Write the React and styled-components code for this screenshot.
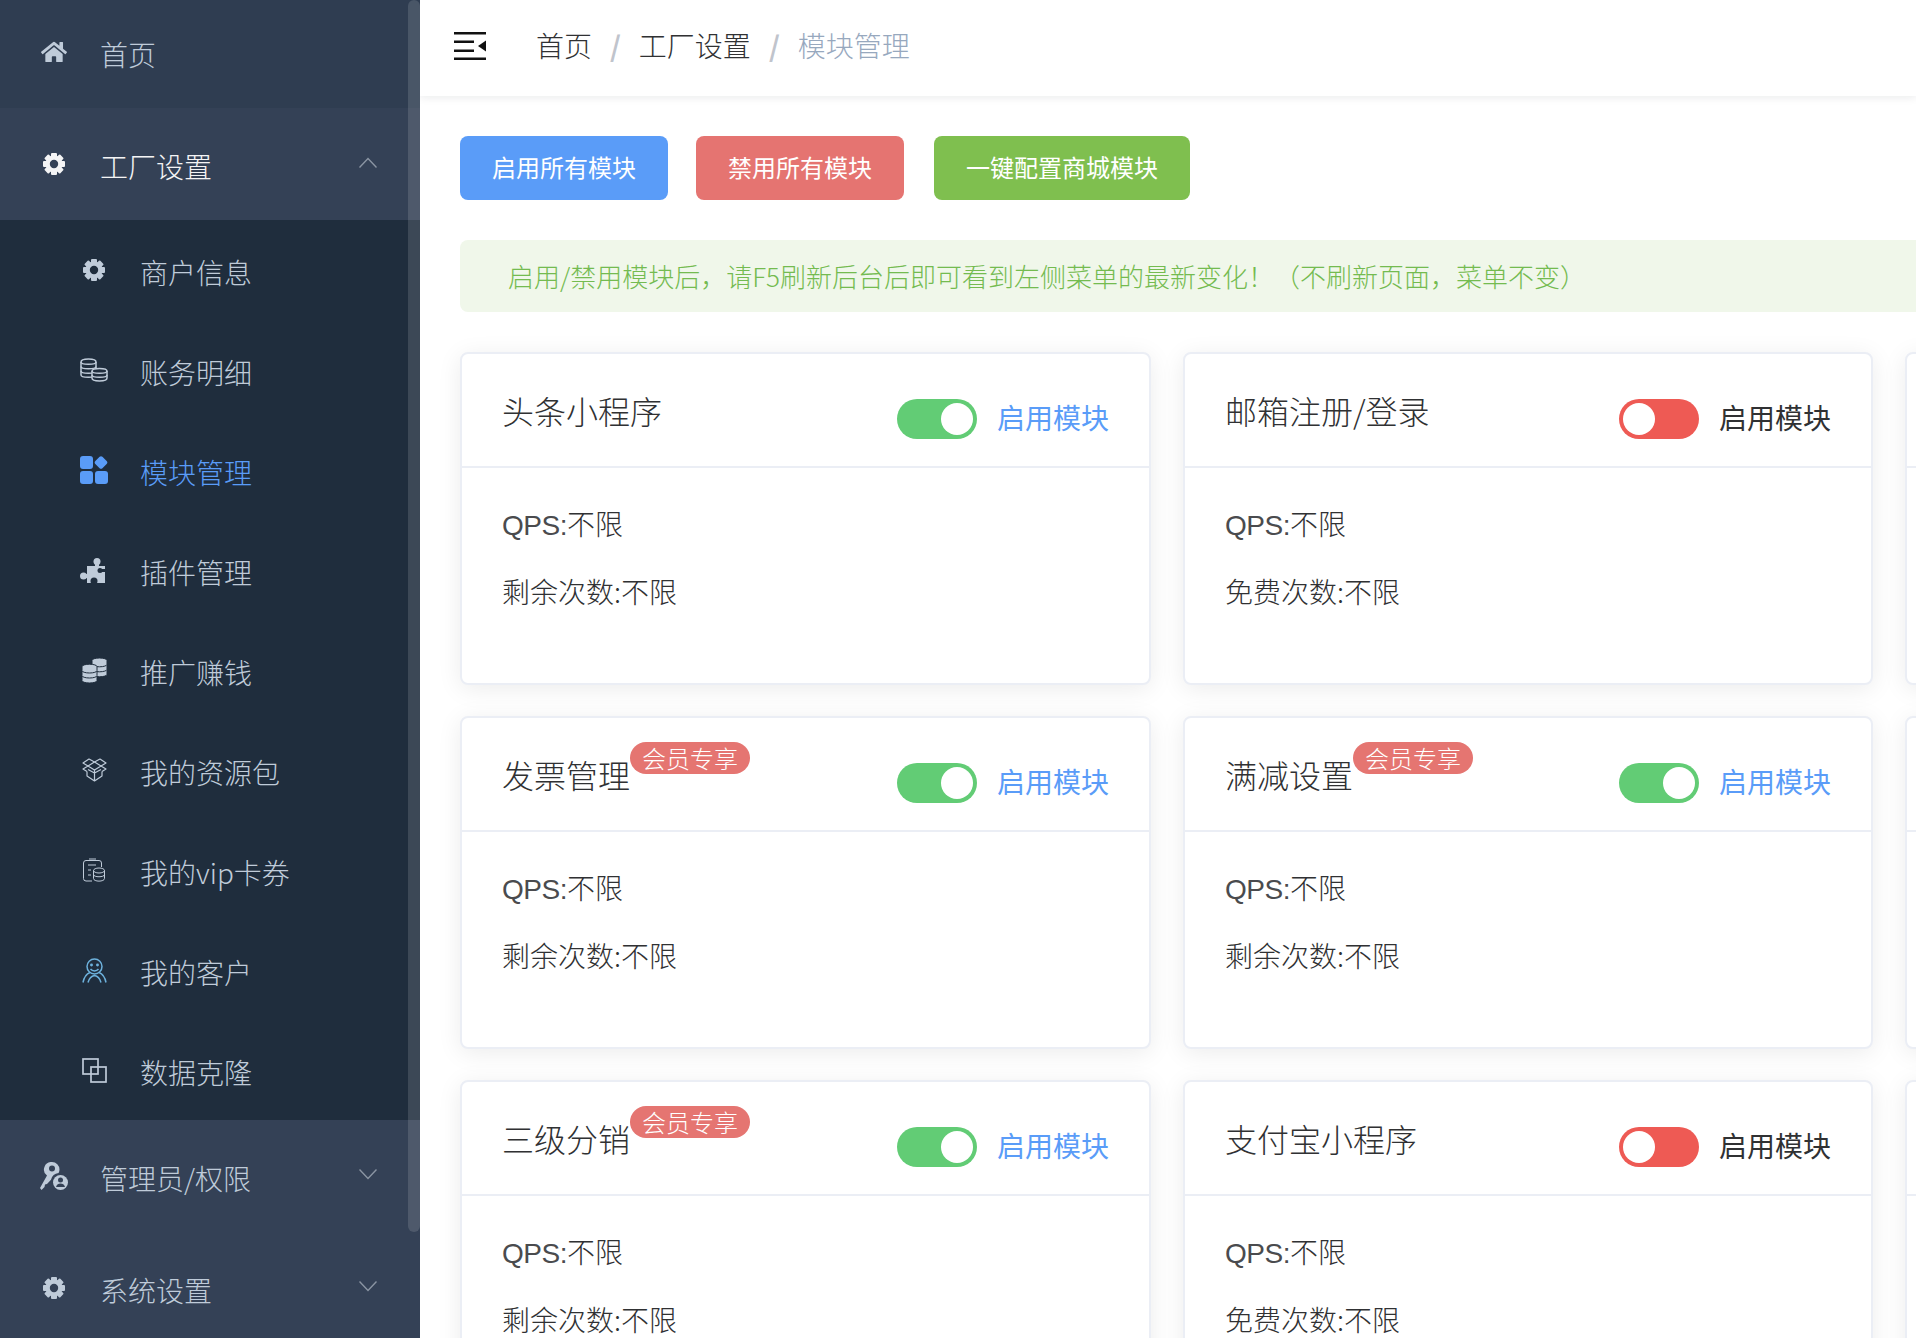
import React from "react";
import styled, { createGlobalStyle } from "styled-components";
import { FaHome } from "react-icons/fa";

const Global = createGlobalStyle`
  html, body { margin: 0; padding: 0; background: #fff; }
  body {
    font-family: "Noto Sans CJK SC", "Liberation Sans", sans-serif;
    font-weight: 300;
    color: #303133;
  }
  * { box-sizing: border-box; }
`;

const Page = styled.div`
  display: flex;
  width: 1916px;
  height: 1338px;
  overflow: hidden;
`;

/* ---------- sidebar ---------- */

const Side = styled.aside`
  position: relative;
  flex: 0 0 420px;
  height: 100%;
  overflow: hidden;
  background: #344156;
`;

const Menu = styled.nav`
  margin-top: -4px;
`;

const Row = styled.div`
  display: flex;
  align-items: center;
  height: ${(p) => (p.$sub ? 100 : 112)}px;
  padding-left: ${(p) => (p.$sub ? 80 : 40)}px;
  padding-right: 43px;
  background: ${(p) => (p.$sub ? "#1f2d3d" : p.$first ? "#2f3d51" : "#344156")};
  color: ${(p) => (p.$active ? "#5a9cf8" : p.$open ? "#f4f4f5" : "#bfcbd9")};
`;

const IconBox = styled.span`
  display: flex;
  align-items: center;
  justify-content: center;
  flex: 0 0 28px;
  height: 28px;
  margin-right: 32px;
`;

const Label = styled.span`
  flex: 1;
  padding-top: 4px;
  font-size: 28px;
  line-height: 40px;
`;

const Scroll = styled.div`
  position: absolute;
  top: 0;
  right: 0;
  width: 12px;
  height: 1232px;
  border-radius: 6px;
  background: rgba(255, 255, 255, 0.13);
`;

/* ---------- icons ---------- */

const Gear = ({ size = 22 }) => (
  <svg width={size} height={size} viewBox="0 0 22 22" fill="currentColor">
    {[0, 45, 90, 135, 180, 225, 270, 315].map((a) => (
      <rect key={a} x="8" y="0" width="6" height="5" rx="1" transform={`rotate(${a} 11 11)`} />
    ))}
    <circle cx="11" cy="11" r="6.3" fill="none" stroke="currentColor" strokeWidth="4.2" />
  </svg>
);

const ChevronSvg = styled.svg`
  margin-bottom: 4px;
`;

const Chevron = ({ up }) => (
  <ChevronSvg width="18" height="11" viewBox="0 0 18 11" fill="none" stroke="#8b95a3" strokeWidth="1.4">
    <polyline points={up ? "0.5,10.5 9,1.5 17.5,10.5" : "0.5,0.5 9,9.5 17.5,0.5"} />
  </ChevronSvg>
);

const Ledger = () => (
  <svg width="28" height="24" viewBox="0 0 28 24" fill="#1f2d3d" stroke="currentColor" strokeWidth="1.5">
    <path d="M1 4c0-4 15-4 15 0v13c0 3-15 3-15 0z" />
    <path d="M1 4c0 3 15 3 15 0M1 8.500c0 3 15 3 15 0M1 13c0 3 15 3 15 0" fill="none" />
    <path d="M12 13c0-3.500 15-3.500 15 0v7c0 4-15 4-15 0z" />
    <path d="M12 13c0 3 15 3 15 0M12 17c0 3 15 3 15 0" fill="none" />
  </svg>
);

const Apps = () => (
  <svg width="28" height="28" viewBox="0 0 28 28" fill="currentColor">
    <rect x="0" y="0" width="13" height="13" rx="3" />
    <rect x="16" y="1.500" width="10" height="10" rx="2" transform="rotate(45 21 6.500)" />
    <rect x="0" y="15" width="13" height="13" rx="3" />
    <rect x="15" y="15" width="13" height="13" rx="3" />
  </svg>
);

const Puzzle = () => (
  <svg width="28" height="25" viewBox="0 0 28 25" fill="currentColor">
    <rect x="7" y="8" width="18" height="17" />
    <rect x="15" y="4" width="4" height="5" />
    <circle cx="17" cy="3.500" r="3.500" />
    <rect x="3" y="16" width="5" height="4" />
    <circle cx="3.500" cy="18" r="3.500" />
    <circle cx="14" cy="23" r="3.500" fill="#1f2d3d" />
    <rect x="20" y="11" width="6" height="3" fill="#1f2d3d" />
    <circle cx="20" cy="12.500" r="2.500" fill="#1f2d3d" />
  </svg>
);

const coin = (x, y) => `M${x} ${y}a7.500 2.400 0 0 1 15 0v4a7.500 2.400 0 0 1 -15 0z`;

const Coins = () => (
  <svg width="25" height="25" viewBox="0 0 25 25" fill="currentColor" stroke="#1f2d3d" strokeWidth="1">
    {[12.4, 7.4, 2.4].map((y) => <path key={y} d={coin(10, y)} />)}
    {[18.6, 13.6, 8.6].map((y) => <path key={y} d={coin(0, y)} />)}
  </svg>
);

const Box = () => (
  <svg width="25" height="24" viewBox="0 0 25 24" fill="none" stroke="currentColor" strokeWidth="1.200" strokeLinejoin="round">
    <path d="M12.500 4L7 1 1 5l5 3-5 3 4 2.500" />
    <path d="M12.500 4l5.500-3 6 4-5 3 5 3-4 2.500" />
    <path d="M6 8l6.500-4 6.500 4-6.500 4zM6 8l6.500 4 6.500-4" />
    <path d="M12.500 12v11M5 13.500V18l7.500 5 7.500-5v-4.500M6 11.500l6.500 3.500 6.500-3.500" />
  </svg>
);

const VipCard = () => (
  <svg width="22" height="24" viewBox="0 0 22 24" fill="none" stroke="currentColor" strokeWidth="1">
    <path d="M9 23H3a2.500 2.500 0 0 1-2.500-2.500V5A2.500 2.500 0 0 1 3 2.500h13A2.500 2.500 0 0 1 18.500 5v4" />
    <path d="M6 1h7M5 7h8M5 12h3M5 17h3" />
    <ellipse cx="16" cy="12.500" rx="5.500" ry="2.500" />
    <path d="M10.500 12.500v8c0 3.500 11 3.500 11 0v-8M10.500 16.500c0 3 11 3 11 0" />
  </svg>
);

const Customer = () => (
  <svg width="25" height="25" viewBox="0 0 25 25" fill="none" stroke="#6db1dc" strokeWidth="1.500">
    <circle cx="12.500" cy="8.500" r="7.500" />
    <path d="M8.500 11c2 2.500 6 2.500 8 0" />
    <circle cx="9.500" cy="7" r="0.700" />
    <circle cx="15.500" cy="7" r="0.700" />
    <path d="M1 24.500C2 19.500 4 16 8 14.500M24 24.500c-1-5-3-8.500-7-10M6 24.500c1-3.500 3-6.500 6.500-7 3.500.5 5.500 3.500 6.500 7" />
  </svg>
);

const Clone = () => (
  <svg width="25" height="25" viewBox="0 0 25 25" fill="none" stroke="currentColor" strokeWidth="1.700">
    <rect x="1" y="1" width="15" height="15" />
    <rect x="9" y="9" width="15" height="15" />
  </svg>
);

const KeyUser = () => (
  <svg width="28" height="28" viewBox="0 0 28 28" fill="currentColor">
    <path d="M12 0a7.500 7.500 0 0 1 7.500 7.500c0 1.300-.3 2.400-.9 3.500a9 9 0 0 0-7.600 6.700L7 22l-2 .5-.5 2.500L1.500 28 0 26l7-12.500A7.500 7.500 0 0 1 12 0zm0 3.500a3 3 0 1 0 0 6 3 3 0 0 0 0-6z" fillRule="evenodd" />
    <circle cx="20.500" cy="20.500" r="7.500" />
    <circle cx="20.500" cy="18" r="2.500" fill="#344156" />
    <path d="M16 25c.5-2.500 2.500-3.500 4.500-3.500s4 1 4.500 3.500z" fill="#344156" />
  </svg>
);

const MenuToggle = () => (
  <svg width="32" height="28" viewBox="0 0 32 28" fill="#111">
    <rect width="32" height="2.500" />
    <rect y="8.500" width="20" height="2.500" />
    <rect y="17.500" width="20" height="2.500" />
    <rect y="25.500" width="32" height="2.500" />
    <path d="M32 8.500v11l-8-5.500z" />
  </svg>
);

/* ---------- header ---------- */

const Main = styled.main`
  flex: 1;
  min-width: 0;
  overflow: hidden;
`;

const Header = styled.header`
  position: relative;
  display: flex;
  align-items: center;
  height: 96px;
  padding: 0 0 4px 34px;
  background: #fff;
  box-shadow: 0 2px 8px rgba(0, 21, 41, 0.08);
`;

const Crumbs = styled.div`
  display: flex;
  align-items: center;
  margin: 0 0 2px 50px;
  font-size: 28px;
  line-height: 40px;
`;

const Crumb = styled.span`
  color: ${(p) => (p.$current ? "#97a8be" : "#303133")};
`;

const Sep = styled.span`
  margin: 0 18px;
  color: #c0c4cc;
  font-weight: 700;
`;

/* ---------- content ---------- */

const Content = styled.div`
  width: 2170px;
  padding: 40px;
`;

const Toolbar = styled.div`
  display: flex;
  gap: 28px;
  margin-bottom: 40px;
`;

const ActionBtn = styled.button`
  height: 64px;
  padding: 0 32px 4px;
  border: 0;
  border-radius: 8px;
  background: ${(p) => p.$bg};
  color: #fff;
  font-family: inherit;
  font-size: 24px;
  font-weight: 400;
  white-space: nowrap;

  &:last-child {
    margin-left: 2px;
  }
`;

const Notice = styled.div`
  display: flex;
  align-items: center;
  height: 72px;
  margin-bottom: 40px;
  padding: 0 0 2px 48px;
  border-radius: 8px;
  background: #f0f7ea;
  color: #74bb50;
  font-size: 26px;
`;

const Cards = styled.div`
  display: grid;
  grid-template-columns: 691px 690px 690px;
  column-gap: 32px;
  row-gap: 31px;
`;

const Card = styled.section`
  height: 333px;
  border: 2px solid #ebeef5;
  border-radius: 8px;
  background: #fff;
  box-shadow: 0 4px 24px rgba(0, 0, 0, 0.08);
`;

const CardHead = styled.div`
  display: flex;
  align-items: center;
  justify-content: space-between;
  height: 114px;
  padding: 0 40px;
  border-bottom: 2px solid #ebeef5;
`;

const Title = styled.h3`
  position: relative;
  margin: 0;
  font-size: 32px;
  font-weight: 300;
  line-height: 44px;
`;

const Badge = styled.span`
  position: absolute;
  left: 100%;
  top: -10px;
  width: 120px;
  height: 32px;
  border-radius: 16px;
  background: #e57571;
  color: #fff;
  font-size: 24px;
  line-height: 32px;
  text-align: center;
`;

const SwitchWrap = styled.div`
  display: flex;
  align-items: center;
  gap: 20px;
  padding-top: 17px;
`;

const Track = styled.span`
  display: flex;
  justify-content: ${(p) => (p.$on ? "flex-end" : "flex-start")};
  width: 80px;
  height: 40px;
  padding: 4px;
  border-radius: 20px;
  background: ${(p) => (p.$on ? "#62cc75" : "#ee5a54")};
`;

const Knob = styled.span`
  width: 32px;
  height: 32px;
  border-radius: 50%;
  background: #fff;
`;

const SwitchText = styled.span`
  margin-bottom: 3px;
  color: ${(p) => (p.$on ? "#5a9cf8" : "#303133")};
  font-size: 28px;
  font-weight: 400;
  line-height: 40px;
`;

const CardBody = styled.div`
  padding: 37px 40px 0;
`;

const Line = styled.p`
  height: 36px;
  margin: 0 0 32px;
  font-size: 28px;
  line-height: 36px;
`;

const Qps = styled.span`
  color: #4a4b4e;
  font-family: "Liberation Sans", sans-serif;
  font-weight: 400;
  letter-spacing: -0.5px;
  line-height: 1;
`;

const subItems = [
  { label: "商户信息", icon: <Gear /> },
  { label: "账务明细", icon: <Ledger /> },
  { label: "模块管理", icon: <Apps />, active: true },
  { label: "插件管理", icon: <Puzzle /> },
  { label: "推广赚钱", icon: <Coins /> },
  { label: "我的资源包", icon: <Box /> },
  { label: "我的vip卡券", icon: <VipCard /> },
  { label: "我的客户", icon: <Customer /> },
  { label: "数据克隆", icon: <Clone /> },
];

const modules = [
  { title: "头条小程序", on: true, extra: "剩余次数:不限" },
  { title: "邮箱注册/登录", on: false, extra: "免费次数:不限" },
  { blank: true },
  { title: "发票管理", vip: true, on: true, extra: "剩余次数:不限" },
  { title: "满减设置", vip: true, on: true, extra: "剩余次数:不限" },
  { blank: true },
  { title: "三级分销", vip: true, on: true, extra: "剩余次数:不限" },
  { title: "支付宝小程序", on: false, extra: "免费次数:不限" },
  { blank: true },
];

export default function App() {
  return (
    <Page>
      <Global />
      <Side>
        <Menu>
          <Row $first>
            <IconBox><FaHome size={26} /></IconBox>
            <Label>首页</Label>
          </Row>
          <Row $open>
            <IconBox><Gear /></IconBox>
            <Label>工厂设置</Label>
            <Chevron up />
          </Row>
          {subItems.map((item) => (
            <Row $sub $active={item.active} key={item.label}>
              <IconBox>{item.icon}</IconBox>
              <Label>{item.label}</Label>
            </Row>
          ))}
          <Row>
            <IconBox><KeyUser /></IconBox>
            <Label>管理员/权限</Label>
            <Chevron />
          </Row>
          <Row>
            <IconBox><Gear /></IconBox>
            <Label>系统设置</Label>
            <Chevron />
          </Row>
        </Menu>
        <Scroll />
      </Side>
      <Main>
        <Header>
          <MenuToggle />
          <Crumbs>
            <Crumb>首页</Crumb>
            <Sep>/</Sep>
            <Crumb>工厂设置</Crumb>
            <Sep>/</Sep>
            <Crumb $current>模块管理</Crumb>
          </Crumbs>
        </Header>
        <Content>
          <Toolbar>
            <ActionBtn $bg="#5a9cf8">启用所有模块</ActionBtn>
            <ActionBtn $bg="#e57471">禁用所有模块</ActionBtn>
            <ActionBtn $bg="#7fbf4f">一键配置商城模块</ActionBtn>
          </Toolbar>
          <Notice>启用/禁用模块后，请F5刷新后台后即可看到左侧菜单的最新变化！（不刷新页面，菜单不变）</Notice>
          <Cards>
            {modules.map((m, i) =>
              m.blank ? (
                <Card key={i}>
                  <CardHead />
                </Card>
              ) : (
                <Card key={i}>
                  <CardHead>
                    <Title>
                      {m.title}
                      {m.vip && <Badge>会员专享</Badge>}
                    </Title>
                    <SwitchWrap>
                      <Track $on={m.on}><Knob /></Track>
                      <SwitchText $on={m.on}>启用模块</SwitchText>
                    </SwitchWrap>
                  </CardHead>
                  <CardBody>
                    <Line><Qps>QPS:</Qps>不限</Line>
                    <Line>{m.extra}</Line>
                  </CardBody>
                </Card>
              )
            )}
          </Cards>
        </Content>
      </Main>
    </Page>
  );
}
